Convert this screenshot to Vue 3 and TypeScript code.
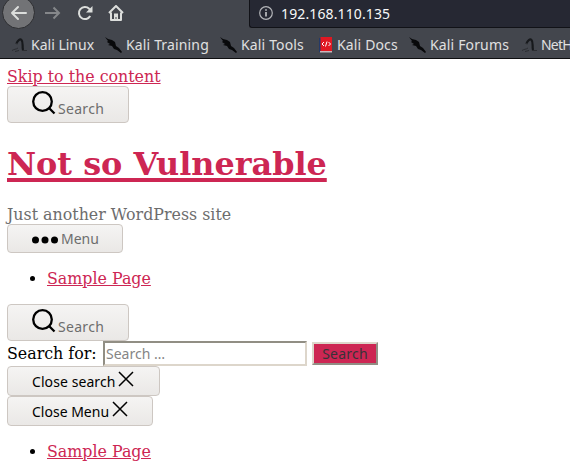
<script setup lang="ts">
type BookmarkIcon = 'dragon' | 'blade' | 'book'

interface Bookmark {
  label: string
  icon: BookmarkIcon
  width: number
}

const bookmarks: Bookmark[] = [
  { label: 'Kali Linux', icon: 'dragon', width: 93 },
  { label: 'Kali Training', icon: 'blade', width: 115 },
  { label: 'Kali Tools', icon: 'blade', width: 99 },
  { label: 'Kali Docs', icon: 'book', width: 90 },
  { label: 'Kali Forums', icon: 'blade', width: 113 },
  { label: 'NetH', icon: 'dragon', width: 60 },
]
</script>

<template>
  <div class="window">
    <header class="chrome">
      <div class="toolbar">
        <div class="nav back">
          <svg width="18" height="16" viewBox="0 0 18 16"><path d="M16 8H2M8 2L2 8l6 6" /></svg>
        </div>
        <svg class="nav forward" width="17" height="16" viewBox="0 0 17 16"><path d="M1 8h14M9.500 2.500L15 8l-5.500 5.500" /></svg>
        <svg class="nav reload" width="16" height="16" viewBox="0 0 16 16">
          <path d="M13.200 11A6 6 0 1 1 12.200 3.800L14 5.500" /><path class="solid" d="M15.500 1v6.500H9z" />
        </svg>
        <svg class="nav home" width="16" height="16" viewBox="0 0 16 16">
          <path d="M1 8l7-7 7 7M3 7.500V15h10V7.500" /><path class="solid" d="M6 15V8.500h4V15H8.500v-3h-1v3z" />
        </svg>
        <div class="address">
          <svg width="14" height="14" viewBox="0 0 14 14">
            <circle cx="7" cy="7" r="6.300" /><path class="mark" d="M7 6v4.500M7 3.300v1.500" />
          </svg>
          <span>192.168.110.135</span>
        </div>
      </div>
      <nav class="bookmarks">
        <div v-for="b in bookmarks" :key="b.label" class="bookmark" :style="{ width: b.width + 'px' }">
          <svg v-if="b.icon === 'dragon'" width="15" height="16" viewBox="0 0 15 16">
            <path class="neck" d="M4.500 6.500C5.500 3.500 8 1.500 9.500 3c2 2 .5 6 1.500 10" />
            <path class="haze" d="M0 13.500c2-1.500 4-1 6-2.500M3 14.500l4-1M10 13.500h5M3.500 6.500l2 .5" />
          </svg>
          <svg v-else-if="b.icon === 'blade'" width="17" height="16" viewBox="0 0 17 16">
            <path class="ink" d="M0 0l3 2 4 1 3 2 1 4 3 2 3 4-1 1-4-3-3-1-2-3-4-1 2-1-3-2 1-1z" />
          </svg>
          <svg v-else width="14" height="16" viewBox="0 0 14 16">
            <path fill="#243a68" d="M0 1h3v14H0z" /><path fill="#e01822" d="M1.500 0H13v14H1.500z" />
            <path fill="#c9b8bc" d="M1 14h12v1.500H1z" />
            <path class="code" d="M5 5L3 7l2 2M9.500 5l2 2-2 2M8 4.500L6.500 9.500" />
          </svg>
          <span>{{ b.label }}</span>
        </div>
      </nav>
    </header>

    <main class="page">
      <div class="line"><a class="skip">Skip to the content</a></div>
      <button class="btn search-toggle">
        <svg width="24" height="24" viewBox="0 0 24 24"><circle cx="10.500" cy="10.500" r="9.300" /><path d="M17 17l5.500 5.500" /></svg>
        <span>Search</span>
      </button>
      <h1><a>Not so Vulnerable</a></h1>
      <p>Just another WordPress site</p>
      <button class="btn menu-toggle">
        <svg width="26" height="8" viewBox="0 0 26 8"><circle cx="3.500" cy="4" r="3.500" /><circle cx="13" cy="4" r="3.500" /><circle cx="22.500" cy="4" r="3.500" /></svg>
        <span>Menu</span>
      </button>
      <ul><li><a>Sample Page</a></li></ul>
      <button class="btn search-toggle">
        <svg width="24" height="24" viewBox="0 0 24 24"><circle cx="10.500" cy="10.500" r="9.300" /><path d="M17 17l5.500 5.500" /></svg>
        <span>Search</span>
      </button>
      <form class="search-form" @submit.prevent>
        <label for="query">Search for:</label>
        <input id="query" type="text" placeholder="Search …">
        <button type="submit" class="submit"><span>Search</span></button>
      </form>
      <button class="btn close close-search">
        <span>Close search</span>
        <svg width="16" height="16" viewBox="0 0 16 16"><path d="M1 1l14 14M15 1L1 15" /></svg>
      </button>
      <button class="btn close close-menu">
        <span>Close Menu</span>
        <svg width="16" height="16" viewBox="0 0 16 16"><path d="M1 1l14 14M15 1L1 15" /></svg>
      </button>
      <ul><li><a>Sample Page</a></li></ul>
    </main>
  </div>
</template>

<style>
body {
  background: #fff;
  overflow: hidden;
}
</style>

<style scoped>
.window {
  width: 570px;
  height: 472px;
  overflow: hidden;
}
svg {
  display: block;
  flex: none;
}
.chrome {
  box-sizing: border-box;
  height: 59px;
  background: #43464d;
  border-bottom: 1px solid #0e0f11;
  font-family: "Noto Sans", sans-serif;
  color: #e0e0e0;
}
.toolbar {
  display: flex;
  height: 28px;
}
.nav {
  margin-top: 5px;
  fill: none;
  stroke: #dcdedc;
  stroke-width: 2;
}
.back {
  box-sizing: border-box;
  width: 33px;
  height: 33px;
  margin: -4px 0 0 2px;
  padding: 8px 0 0 7px;
  border: 1px solid #2d2e31;
  border-radius: 50%;
  background: #727376;
  stroke-linecap: round;
  stroke-linejoin: round;
}
.forward {
  margin-left: 9px;
  stroke: #85878a;
}
.reload {
  margin-left: 16px;
}
.home {
  margin-left: 15px;
  stroke-linejoin: round;
}
.solid {
  fill: #dcdedc;
  stroke: none;
}
.address {
  box-sizing: border-box;
  display: flex;
  flex: 1;
  height: 28px;
  margin-left: 125px;
  padding-left: 9px;
  background: #262833;
  border: solid #111217;
  border-width: 0 0 1px 1px;
  border-bottom-left-radius: 3px;
  color: #f8f8f8;
  font-size: 14px;
  line-height: 27px;
  letter-spacing: 0.12px;
}
.address svg {
  margin: 6px 8px 0 0;
  fill: none;
  stroke: #b4b5b9;
  stroke-width: 1.2;
}
.address .mark {
  stroke-width: 1.8;
}
.bookmarks {
  display: flex;
  height: 30px;
  padding-left: 12px;
}
.bookmark {
  display: flex;
  flex: none;
  gap: 4px;
  font-size: 14px;
  line-height: 34px;
  letter-spacing: 0.15px;
  white-space: nowrap;
}
.bookmark:first-child {
  letter-spacing: 0;
}
.bookmark:last-child {
  letter-spacing: -0.8px;
}
.bookmark svg {
  margin-top: 9px;
}
.ink {
  fill: #08090b;
}
.neck {
  fill: none;
  stroke: #17191c;
  stroke-width: 2.2;
}
.haze {
  fill: none;
  stroke: #2c2e32;
}
.code {
  fill: none;
  stroke: #fff;
}
.page {
  padding: 8px 7px 0;
  font: 15.850px/19px "DejaVu Serif", serif;
  color: #000;
}
.line {
  height: 19px;
}
a {
  color: #cd2653;
  text-decoration: underline;
}
h1 {
  height: 37px;
  margin: 22px 0 23px;
  font-size: 31.850px;
  line-height: 38px;
  white-space: nowrap;
}
h1 a {
  text-decoration-thickness: 4px;
  text-underline-offset: 3px;
  text-decoration-skip-ink: none;
}
p {
  height: 19px;
  margin: 0;
  color: #6d6d6d;
}
ul {
  margin: 16px 0;
  padding-left: 40px;
}
li {
  height: 19px;
}
.btn {
  box-sizing: border-box;
  display: flex;
  margin: 0;
  padding: 0 0 0 24px;
  border: 1px solid #cdc7c2;
  border-radius: 4px;
  background: linear-gradient(#f5f4f3, #eae8e6);
  color: #6d6d6d;
  font: 14px/19px "Noto Sans", sans-serif;
  white-space: nowrap;
}
.search-toggle {
  width: 122px;
  height: 37px;
}
.search-toggle svg {
  margin: 4px 2px 0 0;
  fill: none;
  stroke: #000;
  stroke-width: 2.3;
}
.search-toggle span {
  margin-top: 12px;
  letter-spacing: 0.3px;
}
.menu-toggle {
  width: 116px;
  height: 29px;
}
.menu-toggle svg {
  margin: 11px 3px 0 0;
}
.menu-toggle span {
  margin-top: 4px;
}
.search-form {
  display: flex;
  height: 25px;
  margin: 0;
}
label {
  width: 96px;
  line-height: 25px;
  white-space: nowrap;
}
input {
  box-sizing: border-box;
  width: 204px;
  height: 25px;
  padding: 0 1px;
  border: 2px solid;
  border-color: #918e84 #ddd6cb #ddd6cb #918e84;
  background: #fff;
  font: 14px "Noto Sans", sans-serif;
}
input::placeholder {
  color: #858585;
}
.submit {
  box-sizing: border-box;
  width: 66px;
  height: 23px;
  margin: 1px 0 0 5px;
  padding: 0;
  border: 2px solid;
  border-color: #ddd6cb #918e84 #918e84 #ddd6cb;
  background: #cd2653;
  color: #373338;
  font: 14px/19px "Noto Sans", sans-serif;
  letter-spacing: 0.2px;
}
.close {
  height: 30px;
  color: #000;
}
.close span {
  margin-top: 5px;
  letter-spacing: 0.08px;
}
.close svg {
  margin: 4px 0 0 3px;
  fill: none;
  stroke: #000;
  stroke-width: 1.5;
}
.close-search {
  width: 153px;
}
.close-menu {
  width: 146px;
}
.close-menu span {
  letter-spacing: 0;
}
</style>
